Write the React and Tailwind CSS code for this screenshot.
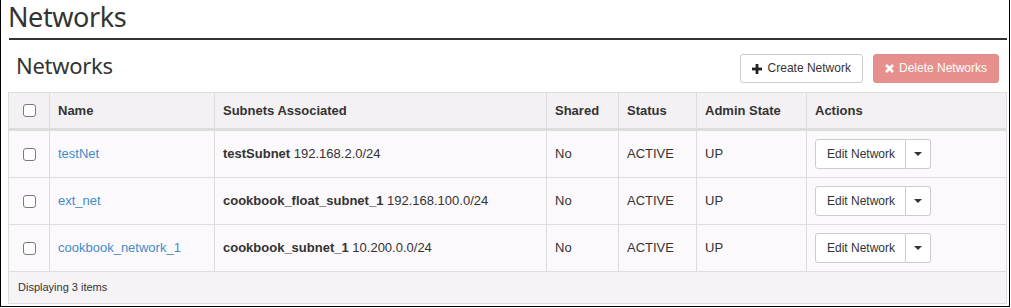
import React from "react";

const rows = [
  { name: "testNet", subnet: "testSubnet", cidr: "192.168.2.0/24" },
  { name: "ext_net", subnet: "cookbook_float_subnet_1", cidr: "192.168.100.0/24" },
  { name: "cookbook_network_1", subnet: "cookbook_subnet_1", cidr: "10.200.0.0/24" },
];

function Checkbox() {
  return <span className="block w-[13px] h-[13px] border border-[#7a7a7a] rounded-[3px] bg-white" />;
}

function PlusIcon() {
  return (
    <svg width="10" height="10" viewBox="0 0 10 10" className="shrink-0">
      <rect x="3.6" y="0" width="2.8" height="10" fill="#222" />
      <rect x="0" y="3.6" width="10" height="2.8" fill="#222" />
    </svg>
  );
}

function TimesIcon() {
  return (
    <svg width="9" height="9" viewBox="0 0 9 9" className="shrink-0">
      <path d="M1 1 L8 8 M8 1 L1 8" stroke="#fff" strokeWidth="2.6" strokeLinecap="butt" />
    </svg>
  );
}

const cols = [
  "w-[41px]",
  "w-[165px]",
  "w-[332px]",
  "w-[72px]",
  "w-[78px]",
  "w-[110px]",
  "w-[199px]",
];

export default function App() {
  return (
    <div
      className="w-[1010px] h-[307px] bg-white border-l border-r border-b border-black pl-[7px] pr-[2px]"
      style={{ fontFamily: '"Liberation Sans", Arial, sans-serif' }}
    >
      <div className="ml-px h-[40px] border-b-2 border-[#333]">
        <div
          className="leading-[33px] text-[27px] tracking-[-0.4px] text-[#333] -ml-[1px]"
          style={{ fontFamily: '"Noto Sans", sans-serif' }}
        >
          Networks
        </div>
      </div>

      <div className="flex h-[52px] items-start justify-between">
        <div
          className="pl-[8px] pt-[10px] leading-[30px] text-[22px] tracking-[-0.3px] text-[#333]"
          style={{ fontFamily: '"Noto Sans", sans-serif' }}
        >
          Networks
        </div>
        <div className="flex gap-[10px] mt-[14px] mr-[8px]">
          <button className="h-[29px] flex items-center gap-[6px] px-[11px] border border-[#ccc] rounded-[3px] bg-white text-[12px] leading-[17px] text-[#333]">
            <PlusIcon />
            <span>Create Network</span>
          </button>
          <button className="h-[29px] flex items-center gap-[5px] px-[11px] border border-[#e3908d] rounded-[3px] bg-[#e68f8c] text-[12px] leading-[17px] text-white">
            <TimesIcon />
            <span>Delete Networks</span>
          </button>
        </div>
      </div>

      <div className="w-[999px] border border-[#ddd] text-[13px] leading-[20px] text-[#333]">
        <div className="flex h-[37px] bg-[#f4f1f4] border-b-2 border-[#ddd] font-bold">
          <div className={`${cols[0]} border-r border-[#ddd] flex items-center justify-center`}>
            <Checkbox />
          </div>
          <div className={`${cols[1]} border-r border-[#ddd] flex items-center px-[8px]`}>Name</div>
          <div className={`${cols[2]} border-r border-[#ddd] flex items-center px-[8px]`}>Subnets Associated</div>
          <div className={`${cols[3]} border-r border-[#ddd] flex items-center px-[8px]`}>Shared</div>
          <div className={`${cols[4]} border-r border-[#ddd] flex items-center px-[8px]`}>Status</div>
          <div className={`${cols[5]} border-r border-[#ddd] flex items-center px-[8px]`}>Admin State</div>
          <div className={`${cols[6]} flex items-center px-[8px]`}>Actions</div>
        </div>

        {rows.map((r) => (
          <div key={r.name} className="flex h-[47px] bg-[#fcf9fc] border-t border-[#ddd]">
            <div className={`${cols[0]} border-r border-[#ddd] flex items-center justify-center`}>
              <Checkbox />
            </div>
            <div className={`${cols[1]} border-r border-[#ddd] flex items-center px-[8px]`}>
              <a className="text-[#428bca]">{r.name}</a>
            </div>
            <div className={`${cols[2]} border-r border-[#ddd] flex items-center px-[8px] whitespace-pre`}>
              <span className="font-bold">{r.subnet}</span>
              <span> {r.cidr}</span>
            </div>
            <div className={`${cols[3]} border-r border-[#ddd] flex items-center px-[8px]`}>No</div>
            <div className={`${cols[4]} border-r border-[#ddd] flex items-center px-[8px]`}>ACTIVE</div>
            <div className={`${cols[5]} border-r border-[#ddd] flex items-center px-[8px]`}>UP</div>
            <div className={`${cols[6]} flex items-center px-[8px]`}>
              <div className="flex h-[30px] text-[12px] leading-[17px]">
                <button className="h-full flex items-center pl-[11px] pr-[10px] border border-[#ccc] rounded-l-[3px] bg-white text-[#333]">
                  Edit Network
                </button>
                <button className="h-full w-[25px] flex items-center justify-center border-y border-r border-[#ccc] rounded-r-[3px] bg-white">
                  <span className="block w-0 h-0 border-t-[4px] border-t-[#333] border-x-[4px] border-x-transparent" />
                </button>
              </div>
            </div>
          </div>
        ))}

        <div className="h-[32px] bg-[#f5f3f5] border-t border-[#ddd] flex items-center pl-[9px] text-[11px] leading-[15px] text-[#333]">
          Displaying 3 items
        </div>
      </div>
    </div>
  );
}
